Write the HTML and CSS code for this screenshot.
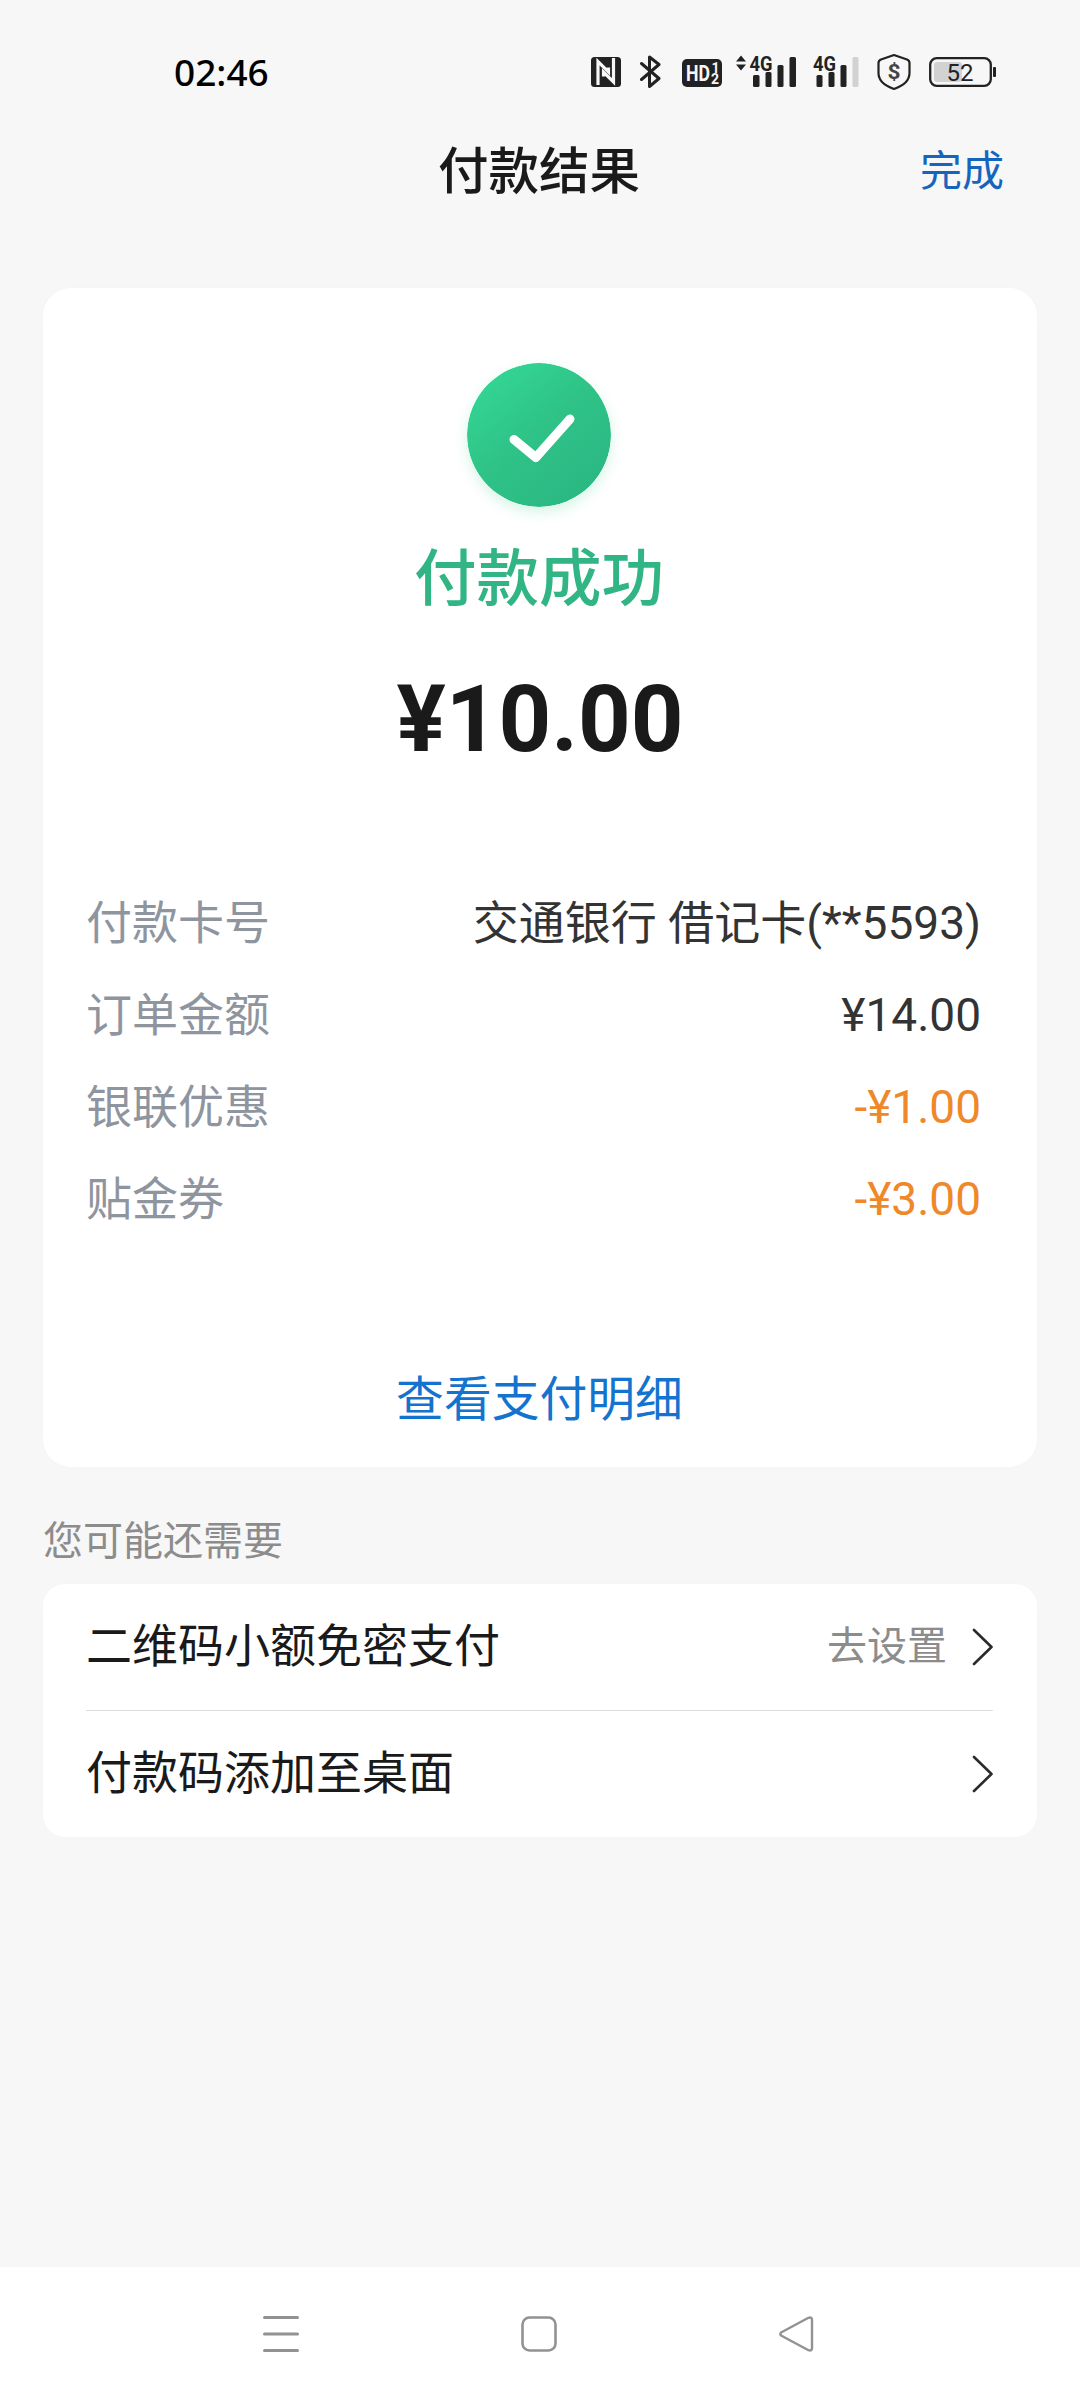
FILE: index.html
```html
<!DOCTYPE html>
<html lang="zh-CN">
<head>
<meta charset="utf-8">
<title>付款结果</title>
<link rel="stylesheet" href="styles.css">
</head>
<body>
<div class="screen">
  <header class="status">
    <span class="time">02:46</span>
    <div class="status-icons">
      <svg class="nfc" width="30" height="44" viewBox="0 0 30 44">
        <rect x="0" y="7" width="30" height="30" rx="3.500" fill="#222"/>
        <path d="M7 35V11.500L17.500 22V17.500M22.500 8V32L12.500 22V26.500" fill="none" stroke="#f7f7f7" stroke-width="3.200"/>
      </svg>
      <svg class="bt" width="21" height="44" viewBox="0 0 21 44">
        <path d="M1.500 13.500L19 28.500L9.500 36.500V7L19 14.500L1.500 29.500" fill="none" stroke="#222" stroke-width="3" stroke-linejoin="round" stroke-linecap="round"/>
      </svg>
      <svg class="hd" width="40" height="44" viewBox="0 0 40 44">
        <rect x="0" y="9" width="40" height="28" rx="5" fill="#222"/>
        <text x="4" y="30.500" class="hd-main" textLength="24" lengthAdjust="spacingAndGlyphs">HD</text>
        <text x="29.500" y="22.500" class="hd-sub">1</text>
        <text x="29" y="34" class="hd-sub">2</text>
      </svg>
      <svg class="sig-a" width="60" height="44" viewBox="0 0 60 44">
        <path d="M0 11.500L5 5.500L10 11.500ZM0 14.500H10L5 20.500Z" fill="#222"/>
        <g fill="#222"><rect x="17" y="25" width="6.500" height="12" rx="1.500"/><rect x="29.500" y="22" width="6" height="15" rx="1.500"/><rect x="41.500" y="15" width="6" height="22" rx="1.500"/><rect x="53.500" y="7" width="6.500" height="30" rx="1.500"/></g>
        <text x="13.500" y="20.500" class="net" textLength="23" lengthAdjust="spacingAndGlyphs">4G</text>
      </svg>
      <svg class="sig-b" width="46" height="44" viewBox="0 0 46 44">
        <g fill="#222"><rect x="3.500" y="25" width="6" height="12" rx="1.500"/><rect x="15.500" y="22" width="6" height="15" rx="1.500"/><rect x="27.500" y="15" width="6" height="22" rx="1.500"/></g>
        <rect x="39.500" y="7" width="6" height="30" rx="1.500" fill="#d2d2d2"/>
        <text x="0" y="20.500" class="net" textLength="23" lengthAdjust="spacingAndGlyphs">4G</text>
      </svg>
      <svg class="shield" width="34" height="44" viewBox="0 0 34 44">
        <path d="M17 5L30 9.500Q32.500 10.500 32.500 13V23C32.500 31 27 35.500 17 39C7 35.500 1.500 31 1.500 23V13Q1.500 10.500 4 9.500Z" fill="none" stroke="#222" stroke-width="2.200" stroke-linejoin="round"/>
        <text x="17" y="29" class="dollar" textLength="13" lengthAdjust="spacingAndGlyphs">$</text>
      </svg>
      <svg class="battery" width="67" height="44" viewBox="0 0 67 44">
        <rect x="5" y="12" width="28" height="20" rx="3" fill="#d2d2d2"/>
        <rect x="1.200" y="8.200" width="60.600" height="27.600" rx="6.500" fill="none" stroke="#222" stroke-width="2.300"/>
        <rect x="64" y="17" width="3" height="10" rx="1" fill="#222"/>
        <text x="31" y="30.500" class="pct" textLength="27" lengthAdjust="spacingAndGlyphs">52</text>
      </svg>
    </div>
  </header>

  <nav class="titlebar">
    <h1 class="title">付款结果</h1>
    <a class="done">完成</a>
  </nav>

  <main class="content">
    <section class="card result">
      <svg class="success" width="144" height="144" viewBox="0 0 144 144">
        <defs><linearGradient id="g" x1="0.100" y1="0.100" x2="0.750" y2="0.900"><stop offset="0" stop-color="#33d695"/><stop offset=".5" stop-color="#2fc387"/><stop offset="1" stop-color="#2bb983"/></linearGradient></defs>
        <circle cx="72" cy="72" r="72" fill="url(#g)"/>
        <path d="M47 76.500L68.800 94.500L103 56" fill="none" stroke="#fff" stroke-width="9" stroke-linecap="round" stroke-linejoin="round"/>
      </svg>
      <p class="state">付款成功</p>
      <p class="amount">¥10.00</p>
      <dl class="details">
        <div class="row"><dt>付款卡号</dt><dd>交通银行 借记卡(**5593)</dd></div>
        <div class="row"><dt>订单金额</dt><dd>¥14.00</dd></div>
        <div class="row"><dt>银联优惠</dt><dd class="off">-¥1.00</dd></div>
        <div class="row"><dt>贴金券</dt><dd class="off">-¥3.00</dd></div>
      </dl>
      <a class="more">查看支付明细</a>
    </section>

    <h2 class="hint">您可能还需要</h2>
    <section class="card list">
      <div class="item">
        <span class="name">二维码小额免密支付</span>
        <span class="action">去设置</span>
        <svg class="chev" width="21" height="40" viewBox="0 0 21 40"><path d="M2 3L19.500 20L2 37" fill="none" stroke="#2b2b2b" stroke-width="2.600" stroke-linecap="round" stroke-linejoin="round"/></svg>
      </div>
      <div class="item">
        <span class="name">付款码添加至桌面</span>
        <svg class="chev" width="21" height="40" viewBox="0 0 21 40"><path d="M2 3L19.500 20L2 37" fill="none" stroke="#2b2b2b" stroke-width="2.600" stroke-linecap="round" stroke-linejoin="round"/></svg>
      </div>
    </section>
  </main>

  <footer class="navbar">
    <svg width="38" height="38" viewBox="0 0 38 38"><path d="M2.500 2.500H35.500M2.500 19H35.500M2.500 35.500H35.500" stroke="#929292" stroke-width="3" stroke-linecap="round"/></svg>
    <svg width="38" height="38" viewBox="0 0 38 38"><rect x="2.500" y="2.500" width="33" height="33" rx="7" fill="none" stroke="#929292" stroke-width="2.600"/></svg>
    <svg width="38" height="38" viewBox="0 0 38 38"><path d="M3.500 17.200L30.500 2.800Q34 1.500 34 5V33Q34 36.500 30.500 35.200L3.500 20.800Q1 19 3.500 17.200Z" fill="none" stroke="#929292" stroke-width="2.400" stroke-linejoin="round"/></svg>
  </footer>
</div>
</body>
</html>
```
FILE: styles.css
```css
* { box-sizing: border-box; margin: 0; padding: 0; }
body { background: #f7f7f7; font-family: Roboto, "Noto Sans CJK SC", sans-serif; color: #1a1a1a; }
svg { display: block; flex: none; }
.screen { width: 1080px; height: 2400px; display: flex; flex-direction: column; }

.status { height: 120px; display: flex; align-items: center; justify-content: space-between; padding: 24px 84px 0 174px; }
.time { font: 500 37px "Noto Sans", sans-serif; color: #000; line-height: 48px; margin-top: -1px; }
.status-icons { display: flex; align-items: center; }
.bt { margin-left: 19px; }
.hd { margin-left: 21px; }
.sig-a { margin-left: 14px; }
.sig-b { margin-left: 17px; }
.shield { margin-left: 18px; }
.battery { margin-left: 18px; }
.hd-main { font: 700 22px Roboto, sans-serif; fill: #f7f7f7; }
.hd-sub { font: 700 14px Roboto, sans-serif; fill: #f7f7f7; }
.net { font: 700 21px Roboto, sans-serif; fill: #222; stroke: #f7f7f7; stroke-width: 2px; paint-order: stroke; }
.dollar { font: 700 20px Roboto, sans-serif; fill: #444; text-anchor: middle; }
.pct { font: 400 24px Roboto, sans-serif; fill: #222; text-anchor: middle; }

.titlebar { height: 100px; display: grid; grid-template-columns: 1fr auto 1fr; align-items: center; padding: 3px 76px 0; }
.title { grid-column: 2; font-size: 50.500px; font-weight: 500; line-height: 72px; margin-right: 2px; }
.done { justify-self: end; font-size: 42px; line-height: 60px; color: #1565bd; }

.content { flex: 1; padding: 68px 43px 0; }
.card { background: #fff; box-shadow: 0 0 12px rgba(0, 0, 0, .012); }
.result { height: 1179px; border-radius: 28px; padding: 75px 56px 0 43px; display: flex; flex-direction: column; align-items: center; }
.success { border-radius: 50%; box-shadow: 0 5px 14px rgba(43, 200, 130, .2); margin-right: -10px; }
.state { margin: 28px -11px 0 0; font-size: 62.500px; line-height: 90px; font-weight: 500; color: #32b584; }
.amount { margin: 40px -13px 0 0; font-size: 92px; line-height: 110px; font-weight: 700; }
.details { align-self: stretch; margin-top: 102px; }
.row { height: 92px; display: flex; justify-content: space-between; align-items: center; font-size: 46px; line-height: 66px; }
dt { color: #8f959e; }
dd { color: #333; }
.off { color: #ee8828; }
.more { margin: 120px -12px 0 0; font-size: 47.800px; line-height: 70px; color: #1573d0; }

.hint { margin: 45px 0 0; font-size: 40px; line-height: 60px; font-weight: 400; color: #8c8c8c; }
.list { margin-top: 12px; height: 253px; border-radius: 22px; padding: 0 44px 0 43px; }
.item { height: 126px; display: flex; align-items: center; }
.item + .item { border-top: 1px solid #dedede; }
.name { flex: 1; font-size: 46px; line-height: 66px; padding-bottom: 2px; }
.action { font-size: 40px; line-height: 60px; color: #8c8c8c; margin-right: 25px; }

.navbar { height: 133px; background: #fff; display: flex; justify-content: center; gap: 220px; align-items: center; padding-right: 2px; }
```
